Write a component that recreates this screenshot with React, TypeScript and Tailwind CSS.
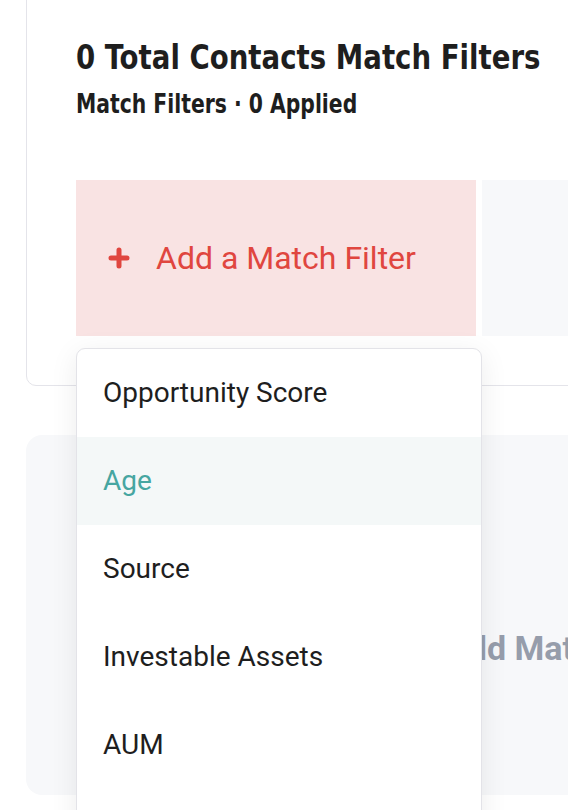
import React from 'react';

const options = ['Opportunity Score', 'Age', 'Source', 'Investable Assets', 'AUM'];

const headFont = { fontFamily: '"DejaVu Sans Condensed", "Liberation Sans", sans-serif' };

function PlusIcon() {
  return (
    <svg width="22" height="22" viewBox="0 0 22 22" className="shrink-0">
      <path d="M11 3v16M3 11h16" stroke="#e0463f" strokeWidth="5" strokeLinecap="round" />
    </svg>
  );
}

export default function App() {
  return (
    <div className="w-[568px] h-[810px] overflow-hidden bg-white font-['Roboto',sans-serif]">
      {/* Filters card */}
      <div className="ml-[26px] w-[640px] -mt-[20px] pt-[57px] pl-[49px] pb-[49px] border border-[#e4e4ea] rounded-[10px]">
        <h1
          className="text-[33px] leading-[40px] font-bold text-[#1e1e1e] whitespace-nowrap origin-left scale-x-[0.93]"
          style={headFont}
        >
          0 Total Contacts Match Filters
        </h1>
        <p
          className="mt-[10px] text-[26px] leading-[32px] font-bold text-[#1e1e1e] whitespace-nowrap origin-left scale-x-[0.87]"
          style={headFont}
        >
          Match Filters · 0 Applied
        </p>

        <div className="mt-[60px] flex gap-[6px]">
          <div className="relative">
            <button className="w-[400px] h-[156px] bg-[#f9e3e3] flex items-center pl-[32px] gap-[26px] text-[#e0463f] text-[32px]">
              <PlusIcon />
              <span>Add a Match Filter</span>
            </button>

            {/* Dropdown menu */}
            <div className="absolute z-10 left-0 top-[168px] w-[406px] h-[520px] bg-white border border-[#e3e3e8] rounded-[9px] shadow-[0_6px_28px_rgba(0,0,0,0.08)] overflow-hidden">
              {options.map((o, i) => (
                <div
                  key={o}
                  className={`h-[88px] flex items-center pl-[26px] text-[28px] ${
                    i === 1 ? 'bg-[#f4f8f8] text-[#46a6a1]' : 'text-[#1e1e1e]'
                  }`}
                >
                  {o}
                </div>
              ))}
            </div>
          </div>
          <div className="flex-1 h-[156px] bg-[#f7f8fa]" />
        </div>
      </div>

      {/* Empty state panel */}
      <div className="mt-[49px] ml-[26px] w-[700px] h-[360px] rounded-[16px] bg-[#f7f8fa] flex items-center pl-[419px] pt-[66px]">
        <span className="text-[34px] font-bold text-[#969dab] whitespace-nowrap">Add Match Filters</span>
      </div>
    </div>
  );
}
